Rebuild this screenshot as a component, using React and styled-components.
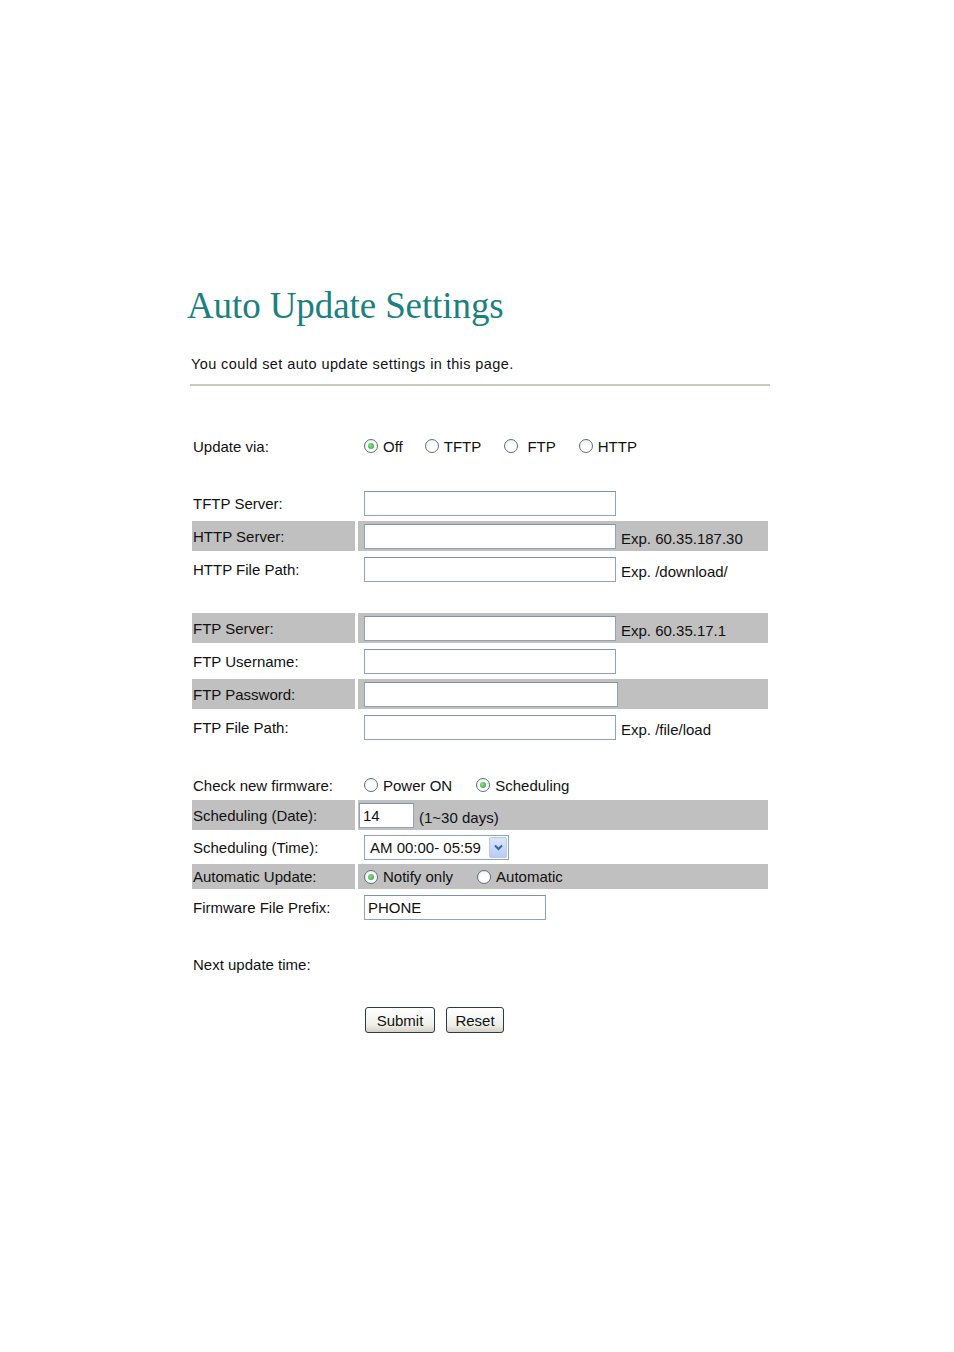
import React from "react";
import styled, { createGlobalStyle } from "styled-components";

const Global = createGlobalStyle`
  html, body { margin: 0; padding: 0; background: #fff; }
  body { font-family: "Liberation Sans", Arial, sans-serif; color: #111; }
`;

const Page = styled.div`
  width: 954px;
  height: 1352px;
  box-sizing: border-box;
  padding: 284px 0 0 187px;
`;

const Title = styled.h1`
  margin: 0;
  font-family: "Liberation Serif", "Times New Roman", serif;
  font-weight: normal;
  font-size: 37px;
  line-height: 44px;
  color: #1b8080;
  letter-spacing: -0.1px;
`;

const Intro = styled.p`
  margin: 27px 0 0 4px;
  font-size: 14.5px;
  line-height: 18px;
  letter-spacing: 0.4px;
  color: #111;
`;

const Rule = styled.div`
  margin: 11px 0 0 3px;
  width: 580px;
  height: 2px;
  background: #c9c9bd;
`;

const Form = styled.div`
  margin: 46px 0 0 5px;
  display: flex;
  flex-direction: column;
`;

const Section = styled.div`
  display: flex;
  flex-direction: column;
  gap: 3px;
  margin-top: ${(p) => p.$top || 0}px;
`;

const Row = styled.div`
  display: grid;
  grid-template-columns: 163px 410px;
  column-gap: 3px;
  height: ${(p) => p.$h || 30}px;
`;

const Label = styled.div`
  display: flex;
  align-items: center;
  padding-left: 1px;
  font-size: 15px;
  background: ${(p) => (p.$shade ? "#c0c0c0" : "transparent")};
`;

const Value = styled.div`
  display: flex;
  align-items: center;
  padding-left: ${(p) => (p.$pad ?? 6)}px;
  font-size: 15px;
  background: ${(p) => (p.$shade ? "#c0c0c0" : "transparent")};
`;

const TextBox = styled.div`
  box-sizing: border-box;
  width: ${(p) => p.$w || 252}px;
  height: 25px;
  border: 1px solid #8fa3b8;
  border-top-color: #7f93a8;
  background: #fff;
  display: flex;
  align-items: center;
  padding-left: 3px;
  font-size: 15px;
  color: #111;
  flex-shrink: 0;
`;

const Hint = styled.span`
  margin-left: 5px;
  margin-top: 4px;
  font-size: 15px;
  white-space: nowrap;
`;

const RadioGroup = styled.div`
  display: flex;
  align-items: center;
`;

const Option = styled.label`
  display: flex;
  align-items: center;
  gap: 5px;
  margin-right: ${(p) => p.$gap ?? 23}px;
  font-size: 15px;
  white-space: pre;
`;

const Circle = styled.span`
  box-sizing: border-box;
  width: 14px;
  height: 14px;
  border-radius: 50%;
  border: 1px solid #5d6f82;
  background: radial-gradient(circle at 60% 65%, #ffffff 40%, #e4e4de 100%);
  display: flex;
  align-items: center;
  justify-content: center;
  flex-shrink: 0;
  &::after {
    content: "";
    width: 6px;
    height: 6px;
    border-radius: 50%;
    background: ${(p) => (p.$on ? "radial-gradient(circle at 40% 40%, #8fe08f, #2a9a2a)" : "transparent")};
  }
`;

const Select = styled.div`
  box-sizing: border-box;
  width: 145px;
  height: 25px;
  border: 1px solid #8fa3b8;
  background: #fff;
  display: flex;
  align-items: center;
  justify-content: space-between;
  padding: 1px 1px 1px 5px;
  font-size: 15px;
`;

const SelectArrow = styled.span`
  width: 18px;
  height: 21px;
  border-radius: 2px;
  background: linear-gradient(#dbe6fb, #b9cdf5);
  border: 1px solid #b8c9ec;
  box-sizing: border-box;
  display: flex;
  align-items: center;
  justify-content: center;
`;

const Buttons = styled.div`
  display: flex;
  gap: 11px;
  margin: 28px 0 0 173px;
`;

const Button = styled.button`
  box-sizing: border-box;
  height: 26px;
  width: ${(p) => p.$w}px;
  padding: 0;
  border: 1px solid #2f3a44;
  border-radius: 3px;
  background: linear-gradient(#ffffff, #f0f0ea 70%, #d6d0c5);
  font-family: "Liberation Sans", Arial, sans-serif;
  font-size: 15px;
  color: #111;
`;

function Radio({ on, children, gap }) {
  return (
    <Option $gap={gap}>
      <Circle $on={on} />
      {children}
    </Option>
  );
}

function Field({ label, shade, w, hint }) {
  return (
    <Row>
      <Label $shade={shade}>{label}</Label>
      <Value $shade={shade}>
        <TextBox $w={w} />
        {hint && <Hint>{hint}</Hint>}
      </Value>
    </Row>
  );
}

export default function App() {
  return (
    <Page>
      <Global />
      <Title>Auto Update Settings</Title>
      <Intro>You could set auto update settings in this page.</Intro>
      <Rule />
      <Form>
        <Section>
          <Row $h={28}>
            <Label>Update via:</Label>
            <Value>
              <RadioGroup>
                <Radio on gap={22}>Off</Radio>
                <Radio gap={23}>TFTP</Radio>
                <Radio gap={23}>{" FTP"}</Radio>
                <Radio>HTTP</Radio>
              </RadioGroup>
            </Value>
          </Row>
        </Section>
        <Section $top={28}>
          <Field label="TFTP Server:" />
          <Field label="HTTP Server:" shade hint="Exp. 60.35.187.30" />
          <Field label="HTTP File Path:" hint="Exp. /download/" />
        </Section>
        <Section $top={29}>
          <Field label="FTP Server:" shade hint="Exp. 60.35.17.1" />
          <Field label="FTP Username:" />
          <Field label="FTP Password:" shade w={254} />
          <Field label="FTP File Path:" hint="Exp. /file/load" />
        </Section>
        <Section $top={31}>
          <Row $h={24}>
            <Label>Check new firmware:</Label>
            <Value>
              <RadioGroup>
                <Radio gap={24}>Power ON</Radio>
                <Radio on>Scheduling</Radio>
              </RadioGroup>
            </Value>
          </Row>
          <Row>
            <Label $shade>Scheduling (Date):</Label>
            <Value $shade $pad={1}>
              <TextBox $w={55}>14</TextBox>
              <Hint>(1~30 days)</Hint>
            </Value>
          </Row>
          <Row $h={28}>
            <Label>Scheduling (Time):</Label>
            <Value>
              <Select>
                AM 00:00- 05:59
                <SelectArrow>
                  <svg width="9" height="7" viewBox="0 0 9 7">
                    <path d="M1 1.5 L4.5 5 L8 1.5" fill="none" stroke="#3a5fb0" strokeWidth="2" />
                  </svg>
                </SelectArrow>
              </Select>
            </Value>
          </Row>
          <Row $h={25}>
            <Label $shade>Automatic Update:</Label>
            <Value $shade>
              <RadioGroup>
                <Radio on gap={24}>Notify only</Radio>
                <Radio>Automatic</Radio>
              </RadioGroup>
            </Value>
          </Row>
          <Row>
            <Label>Firmware File Prefix:</Label>
            <Value>
              <TextBox $w={182}>PHONE</TextBox>
            </Value>
          </Row>
        </Section>
        <Section $top={27}>
          <Row $h={30}>
            <Label>Next update time:</Label>
            <Value />
          </Row>
        </Section>
        <Buttons>
          <Button $w={70}>Submit</Button>
          <Button $w={58}>Reset</Button>
        </Buttons>
      </Form>
    </Page>
  );
}
